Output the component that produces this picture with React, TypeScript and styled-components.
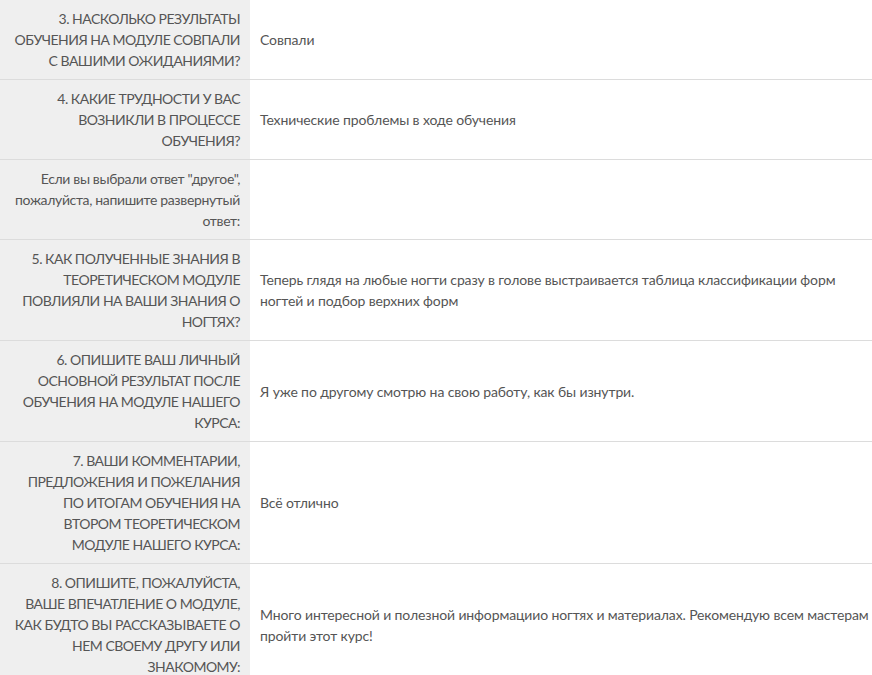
import React from "react";
import styled, { createGlobalStyle } from "styled-components";

const GlobalStyle = createGlobalStyle`
  html, body {
    margin: 0;
    padding: 0;
    background: #fff;
  }
  body {
    font-family: Lato, "Open Sans", "Liberation Sans", sans-serif;
    color: #555;
  }
`;

const AnswersTable = styled.div`
  display: grid;
  grid-template-columns: 250px 1fr;
  width: 872px;
`;

const Row = styled.div`
  display: contents;
`;

const Cell = styled.div<{ $last?: boolean }>`
  display: flex;
  align-items: center;
  padding: 8px 10px;
  min-height: 63px;
  border-bottom: ${(p) => (p.$last ? "none" : "1px solid #dcdcdc")};
  font-size: 14px;
  line-height: 21px;
  box-sizing: content-box;
`;

const Question = styled(Cell)<{ $caps?: boolean }>`
  background: #efefef;
  justify-content: flex-end;
  text-align: right;
  padding-left: 11px;
  letter-spacing: ${(p) => (p.$caps ? "-0.5px" : "-0.35px")};
`;

const Answer = styled(Cell)`
  padding-right: 0;
  letter-spacing: -0.12px;
`;

type Item = { q: string; a: string; caps?: boolean };

const items: Item[] = [
  {
    q: "3. НАСКОЛЬКО РЕЗУЛЬТАТЫ ОБУЧЕНИЯ НА МОДУЛЕ СОВПАЛИ С ВАШИМИ ОЖИДАНИЯМИ?",
    a: "Совпали",
    caps: true,
  },
  {
    q: "4. КАКИЕ ТРУДНОСТИ У ВАС ВОЗНИКЛИ В ПРОЦЕССЕ ОБУЧЕНИЯ?",
    a: "Технические проблемы в ходе обучения",
    caps: true,
  },
  {
    q: 'Если вы выбрали ответ "другое", пожалуйста, напишите развернутый ответ:',
    a: "",
  },
  {
    q: "5. КАК ПОЛУЧЕННЫЕ ЗНАНИЯ В ТЕОРЕТИЧЕСКОМ МОДУЛЕ ПОВЛИЯЛИ НА ВАШИ ЗНАНИЯ О НОГТЯХ?",
    a: "Теперь глядя на любые ногти сразу в голове выстраивается таблица классификации форм ногтей и подбор верхних форм",
    caps: true,
  },
  {
    q: "6. ОПИШИТЕ ВАШ ЛИЧНЫЙ ОСНОВНОЙ РЕЗУЛЬТАТ ПОСЛЕ ОБУЧЕНИЯ НА МОДУЛЕ НАШЕГО КУРСА:",
    a: "Я уже по другому смотрю на свою работу, как бы изнутри.",
    caps: true,
  },
  {
    q: "7. ВАШИ КОММЕНТАРИИ, ПРЕДЛОЖЕНИЯ И ПОЖЕЛАНИЯ ПО ИТОГАМ ОБУЧЕНИЯ НА ВТОРОМ ТЕОРЕТИЧЕСКОМ МОДУЛЕ НАШЕГО КУРСА:",
    a: "Всё отлично",
    caps: true,
  },
  {
    q: "8. ОПИШИТЕ, ПОЖАЛУЙСТА, ВАШЕ ВПЕЧАТЛЕНИЕ О МОДУЛЕ, КАК БУДТО ВЫ РАССКАЗЫВАЕТЕ О НЕМ СВОЕМУ ДРУГУ ИЛИ ЗНАКОМОМУ:",
    a: "Много интересной и полезной информациио ногтях и материалах. Рекомендую всем мастерам пройти этот курс!",
    caps: true,
  },
];

export default function App() {
  return (
    <>
      <GlobalStyle />
      <AnswersTable>
        {items.map((item, i) => {
          const last = i === items.length - 1;
          return (
            <Row key={i}>
              <Question $last={last} $caps={item.caps}>
                {item.q}
              </Question>
              <Answer $last={last}>{item.a}</Answer>
            </Row>
          );
        })}
      </AnswersTable>
    </>
  );
}
